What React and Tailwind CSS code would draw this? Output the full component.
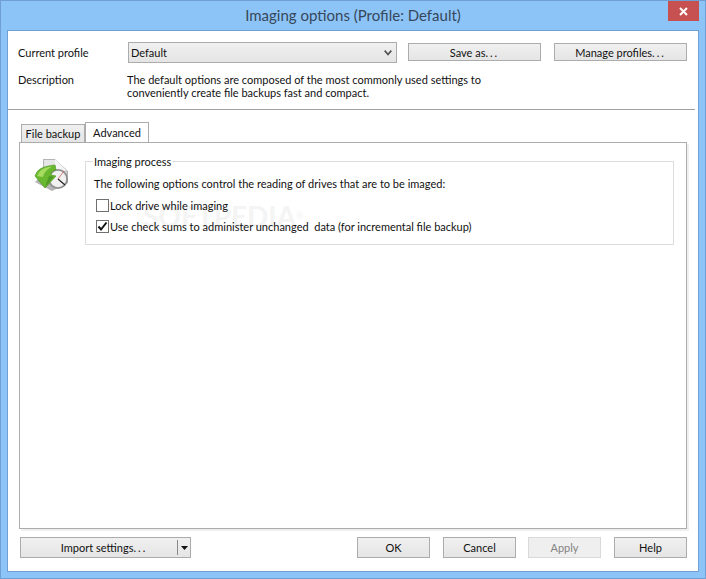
import React from 'react';

const font = "[font-family:'Lato','Liberation_Sans',sans-serif]";

const Btn = ({ children, disabled, className = '' }) => (
  <button
    className={`flex items-center justify-center border bg-gradient-to-b whitespace-nowrap ${
      disabled
        ? 'border-[#d9d9d9] from-[#efefef] to-[#efefef] text-[#838383]'
        : 'border-[#acacac] from-[#f0f0f0] to-[#e5e5e5] text-[#111]'
    } ${className}`}
  >
    {children}
  </button>
);

const Dots = () => <span className="tracking-[2px]">...</span>;

const Check = ({ checked, label }) => (
  <div className="flex items-center h-[13px]">
    <div className="w-[13px] h-[13px] border border-[#707070] bg-white flex items-center justify-center">
      {checked && (
        <svg width="11" height="11" viewBox="0 0 11 11">
          <path d="M1.5 5.5 L4 8.5 L9.5 1.5" fill="none" stroke="#111" strokeWidth="2" />
        </svg>
      )}
    </div>
    <span className="ml-px whitespace-pre">{label}</span>
  </div>
);

const ProcessIcon = () => (
  <svg width="36" height="36" viewBox="0 0 36 36" className="shrink-0">
    <path d="M9 1 L21 1 L34 13 L34 25 L18 33 L1 24 L9 16 Z" fill="#b4b4b4" />
    <path d="M10 2 L21 2 L21 12 L33 14 L30 20 L10 20 Z" fill="#e6e6e6" />
    <path d="M21 1 L33 13 L21 12 Z" fill="#f5f5f5" />
    <circle cx="24" cy="21" r="10" fill="#8f8f8f" />
    <circle cx="24" cy="21" r="8.2" fill="#f1f1f1" />
    <path d="M24 21 L31 27" stroke="#222" strokeWidth="1.2" />
    <path d="M24 21 L30 13" stroke="#d06060" strokeWidth="0.8" />
    <path d="M21 7 C12 8 4 10 2 16 L1 18 L11 30 L22 18 L17 17 C17 14 19 12 22 12 Z" fill="#6ab82f" stroke="#4e9a20" strokeWidth="0.7" />
    <path d="M18 8.5 C12 9 6 11 4 16.5 L3 18 L9 19 C10 14 14 11 18 8.5 Z" fill="#a6dc60" />
    <path d="M11 29 L20 18.5 L15 18 C14 22 12 25 11 29 Z" fill="#4f9a24" />
  </svg>
);

export default function App() {
  return (
    <div className={`w-[706px] h-[579px] border border-[#6f9fd3] bg-[#8cc4f8] flex flex-col relative overflow-hidden text-[11px] leading-[13px] text-[#111] ${font}`}>
      {/* title bar */}
      <div className="h-[29px] shrink-0 flex items-center justify-center text-[15px] text-[#37475a]">
        Imaging options (Profile: Default)
      </div>
      <button className="absolute top-0 right-[6px] w-[31px] h-[20px] bg-[#c75050] flex items-center justify-center">
        <svg width="9" height="9" viewBox="0 0 9 9">
          <path d="M1 1 L8 8 M8 1 L1 8" stroke="#fff" strokeWidth="2" />
        </svg>
      </button>

      {/* client area */}
      <div className="mx-[6px] h-[542px] shrink-0 border border-[#6f9fd3] bg-white flex flex-col">
        <div className="flex items-start pt-[11px] pl-[10px]">
          <div className="w-[110px] h-[21px] flex items-center">Current profile</div>
          <div className="w-[269px] h-[21px] border border-[#acacac] bg-gradient-to-b from-[#f0f0f0] to-[#e5e5e5] flex items-center justify-between pl-[2px] pr-[4px]">
            <span>Default</span>
            <svg width="8" height="6" viewBox="0 0 8 6">
              <path d="M0.7 0.7 L4 4.5 L7.3 0.7" fill="none" stroke="#555" strokeWidth="1.8" />
            </svg>
          </div>
          <Btn className="ml-[11px] mt-px w-[133px] h-[18px]">Save as<Dots /></Btn>
          <Btn className="ml-[13px] mt-px w-[133px] h-[18px]">Manage profiles<Dots /></Btn>
        </div>

        <div className="flex pl-[10px] mt-[10px]">
          <div className="w-[109px]">Description</div>
          <div className="whitespace-nowrap">
            The default options are composed of the most commonly used settings to
            <br />
            conveniently create file backups fast and compact.
          </div>
        </div>

        <div className="h-px bg-[#a0a0a0] mt-[10px] mr-[3px]" />

        {/* tabs */}
        <div className="flex items-end pl-[13px] mt-[11px] h-[21px]">
          <div className="w-[64px] h-[18px] border border-b-0 border-[#acacac] bg-gradient-to-b from-[#f0f0f0] to-[#e5e5e5] flex items-center justify-center whitespace-nowrap">
            File backup
          </div>
          <div className="w-[64px] h-[21px] -mb-px border border-b-0 border-[#acacac] bg-white flex items-center justify-center pb-[2px] relative">
            Advanced
          </div>
        </div>

        {/* tab panel */}
        <div className="ml-[11px] w-[668px] h-[387px] border border-[#acacac] bg-white shadow-[2px_2px_0_#efefef] flex items-start pl-[14px] pr-[12px] pt-[15px] relative">
          {/* watermark */}
          <div className="absolute left-[123px] top-[56px] text-[28px] leading-[34px] font-bold text-[#f4f4f4] pointer-events-none whitespace-nowrap">
            SOFTPEDIA<span className="text-[9px] align-top font-normal">®</span>
          </div>
          <ProcessIcon />
          <fieldset className="ml-[15px] flex-1 h-[90px] -mt-[3px] border border-[#dcdcdc] relative">
            <legend className="ml-[7px] px-px">Imaging process</legend>
            <div className="pl-[8px] pt-[9px]">
              <div>The following options control the reading of drives that are to be imaged:</div>
              <div className="mt-[9px] ml-[2px]">
                <Check label="Lock drive while imaging" />
              </div>
              <div className="mt-[8px] ml-[2px]">
                <Check checked label="Use check sums to administer unchanged  data (for incremental file backup)" />
              </div>
            </div>
          </fieldset>
        </div>

        {/* bottom buttons */}
        <div className="flex items-start mt-[8px] pl-[12px]">
          <Btn className="w-[171px] h-[21px]">
            <span className="w-[157px] text-center pl-[10px]">Import settings<Dots /></span>
            <span className="w-px h-[15px] bg-[#8a8a8a]" />
            <span className="w-[12px] flex justify-center">
              <svg width="7" height="4" viewBox="0 0 7 4">
                <path d="M0 0 H7 L3.5 4 Z" fill="#111" />
              </svg>
            </span>
          </Btn>
          <Btn className="ml-[166px] w-[73px] h-[21px]">OK</Btn>
          <Btn className="ml-[13px] w-[73px] h-[21px]">Cancel</Btn>
          <Btn disabled className="ml-[12px] w-[73px] h-[21px]">Apply</Btn>
          <Btn className="ml-[13px] w-[73px] h-[21px]">Help</Btn>
        </div>
      </div>
    </div>
  );
}
